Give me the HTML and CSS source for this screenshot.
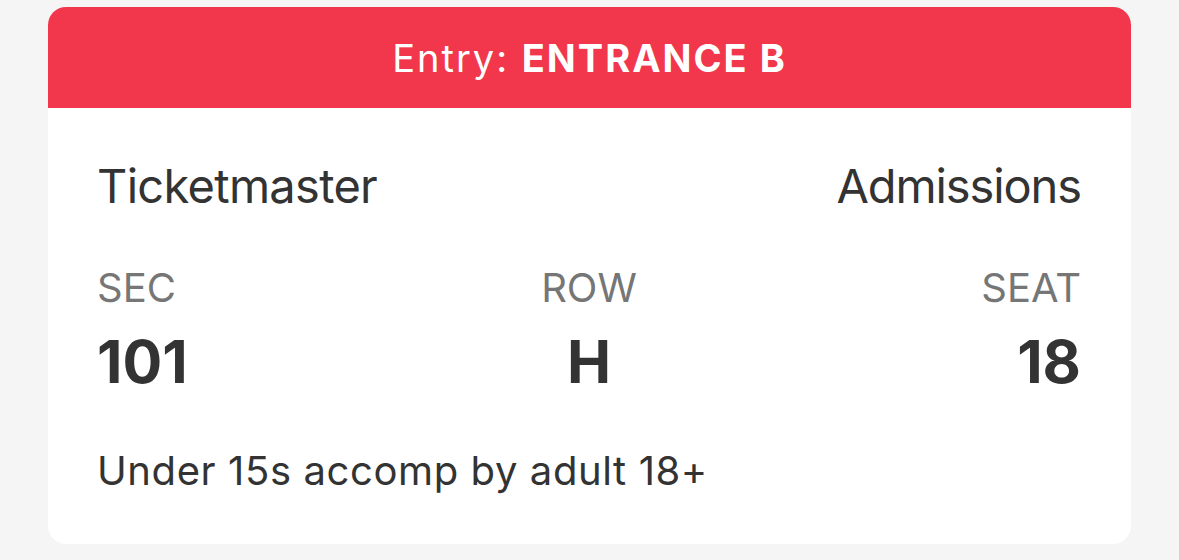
FILE: index.html
```html
<!DOCTYPE html>
<html>
<head>
<meta charset="utf-8">
<link rel="stylesheet" href="styles.css">
</head>
<body>
<div class="card">
  <div class="entry">Entry: <strong>ENTRANCE B</strong></div>
  <div class="body">
    <div class="top-row">
      <span>Ticketmaster</span>
      <span class="admissions">Admissions</span>
    </div>
    <div class="seats">
      <div class="col left"><div class="label">SEC</div><div class="value">101</div></div>
      <div class="col mid"><div class="label">ROW</div><div class="value">H</div></div>
      <div class="col right"><div class="label">SEAT</div><div class="value">18</div></div>
    </div>
    <div class="note">Under 15s accomp by adult 18+</div>
  </div>
</div>
</body>
</html>
```

FILE: styles.css
```css
html, body {
  margin: 0;
  padding: 0;
  background: #f5f5f5;
  font-family: Inter, "Noto Sans", sans-serif;
}
body {
  padding: 7px 48px 0 48px;
}
.card {
  width: 1083px;
  height: 537px;
  background: #ffffff;
  border-radius: 18px;
  overflow: hidden;
  display: flex;
  flex-direction: column;
}
.entry {
  height: 101px;
  background: #f2364c;
  color: #ffffff;
  font-size: 38px;
  line-height: 102px;
  text-align: center;
  letter-spacing: 2px;
}
.entry strong {
  font-weight: 700;
}
.body {
  padding: 50px 50px 0 49px;
  color: #333333;
}
.top-row {
  display: flex;
  justify-content: space-between;
  font-size: 47px;
  line-height: 56px;
  letter-spacing: -0.7px;
}
.top-row .admissions {
  letter-spacing: -1.1px;
}
.seats {
  display: grid;
  grid-template-columns: 1fr 1fr 1fr;
  margin-top: 50px;
}
.col.left { text-align: left; }
.col.mid { text-align: center; }
.col.right { text-align: right; }
.label {
  color: #767676;
  font-size: 40px;
  line-height: 48px;
}
.value {
  margin-top: 17px;
  font-size: 59px;
  line-height: 66px;
  font-weight: 700;
}
.note {
  margin-top: 52px;
  font-size: 40px;
  line-height: 48px;
  letter-spacing: 0.6px;
}
```
